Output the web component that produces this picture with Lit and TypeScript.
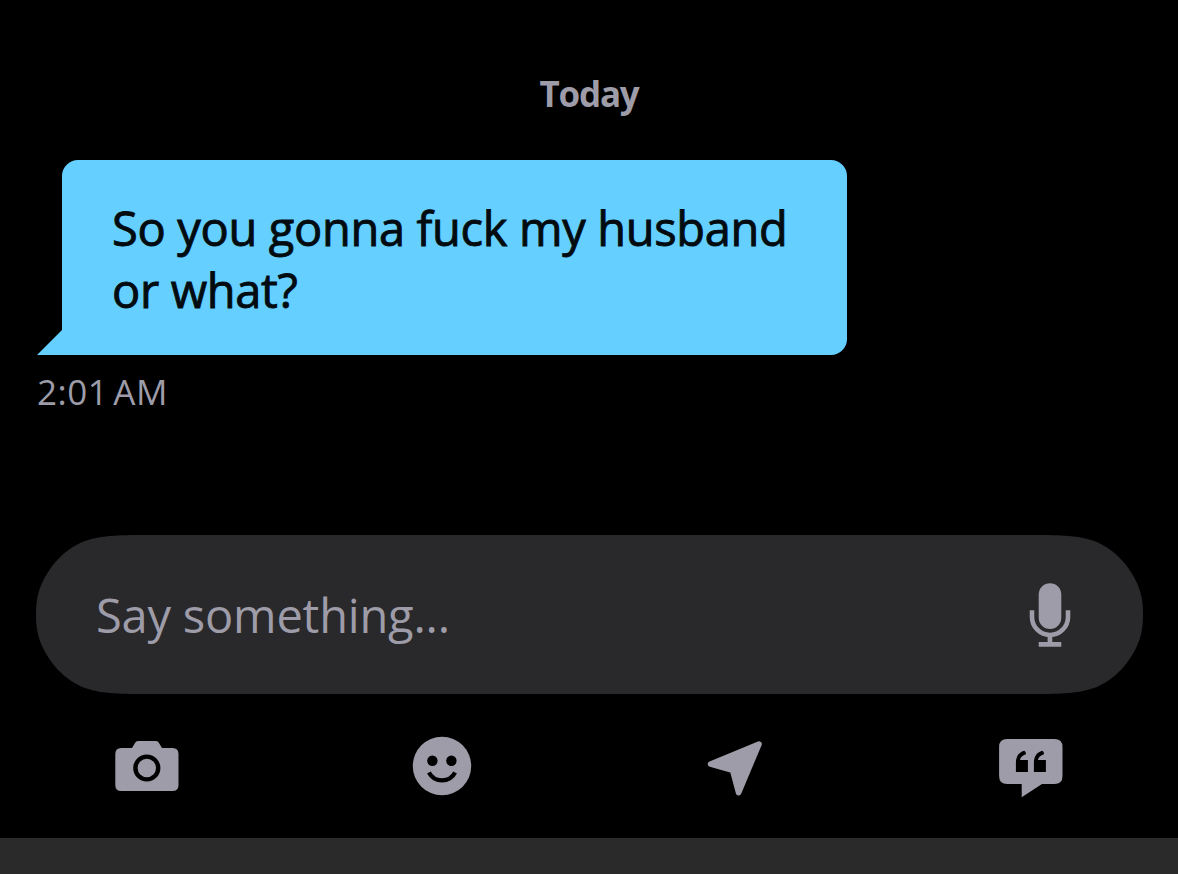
import { LitElement, css, html, svg } from "lit";
import { customElement, property } from "lit/decorators.js";

const icons = {
  camera: svg`
    <path
      fill-rule="evenodd"
      d="M6.3 14H17L20 9Q21 7 23.2 7H41Q43 7 44 9L47 14H57.5Q63.5 14 63.5 20V51Q63.5 57 57.5 57H6.3Q.3 57 .3 51V20Q.3 14 6.3 14ZM31.8 20.4A13.6 13.6 0 1 0 31.8 47.6A13.6 13.6 0 1 0 31.8 20.4Z"
    />
    <circle cx="31.8" cy="34" r="9.2" />
  `,
  smiley: svg`
    <circle cx="32" cy="32" r="29.2" />
    <g class="cutout">
      <circle cx="22.4" cy="26.7" r="5.2" />
      <circle cx="41.4" cy="26.7" r="5.2" />
    </g>
    <path class="smile" d="M18.9 38.4A14.8 14.8 0 0 0 45.1 38.4" />
  `,
  location: svg`
    <path class="rounded" d="M55 10.1L6.6 30.1L28.6 36.2L34.6 58.7Z" />
  `,
  quote: svg`
    <path
      d="M8.1 5H55.5Q63.5 5 63.5 13V42Q63.5 50 55.5 50H43L22.7 63.3V50H8.1Q.1 50 .1 42V13Q.1 5 8.1 5Z"
    />
    <g class="cutout">
      <path d="M16.9 38V29C16.9 22.5 19.7 18.2 25.3 16.7Q27.3 17.8 26.9 20.2C23.5 21.3 21.5 23.2 21 26H28.9V38Z" />
      <path d="M34.9 38V29C34.9 22.5 37.7 18.2 43.3 16.7Q45.3 17.8 44.9 20.2C41.5 21.3 39.5 23.2 39 26H46.9V38Z" />
    </g>
  `,
};

@customElement("chat-bubble")
export class ChatBubble extends LitElement {
  @property() time = "";

  static override styles = css`
    :host {
      display: flex;
      flex-direction: column;
      align-items: flex-start;
    }

    .bubble {
      position: relative;
      box-sizing: border-box;
      width: 785px;
      height: 195px;
      margin-left: 25px;
      padding: 37px 40px 0 50px;
      border-radius: 16px 16px 16px 0;
      background-color: #65cfff;
      color: #020b10;
      font-size: 47px;
      line-height: 62px;
      letter-spacing: -0.33px;
      white-space: pre-line;
      -webkit-text-stroke: 0.9px currentColor;
    }

    .bubble::before {
      content: "";
      position: absolute;
      left: -25px;
      bottom: 0;
      width: 26px;
      height: 26px;
      background-color: #65cfff;
      clip-path: polygon(0 100%, 100% 0, 100% 100%);
    }

    time {
      margin-top: 12px;
      font-size: 35px;
      line-height: 50px;
      letter-spacing: 0.5px;
      word-spacing: -4.5px;
      color: #9d9ca8;
    }
  `;

  override render() {
    return html`
      <div class="bubble"><slot></slot></div>
      <time>${this.time}</time>
    `;
  }
}

@customElement("message-input")
export class MessageInput extends LitElement {
  static override styles = css`
    :host {
      box-sizing: border-box;
      display: flex;
      align-items: center;
      justify-content: space-between;
      width: 1107px;
      height: 159px;
      padding: 0 72px 0 60px;
      background-color: #29292b;
      color: #9d9ca8;
      clip-path: path(
        "M105 0H1002C1030 0 1045 1.5 1058 6C1079 14 1095 32 1103 53C1106 62 1107 69 1107 79.5C1107 90 1106 97 1103 106C1095 127 1079 145 1058 153C1045 157.5 1030 159 1002 159H105C77 159 62 157.5 49 153C28 145 12 127 4 106C1 97 0 90 0 79.5C0 69 1 62 4 53C12 32 28 14 49 6C62 1.5 77 0 105 0Z"
      );
    }

    span {
      font-size: 47px;
      line-height: 62px;
      letter-spacing: -0.2px;
    }

    svg {
      fill: currentColor;
    }

    .arm {
      fill: none;
      stroke: currentColor;
      stroke-width: 4.6;
    }
  `;

  override render() {
    return html`
      <span>Say something...</span>
      <svg width="42" height="64" viewBox="0 0 42 64">
        <rect x="9.7" y=".3" width="22.6" height="45.7" rx="11.3" />
        <path class="arm" d="M3 27.3V34A18 18 0 0 0 39 34V27.3" />
        <path d="M18.6 53H23.3V59H32.3V63.8H9.7V59H18.6Z" />
      </svg>
    `;
  }
}

@customElement("app-root")
export class AppRoot extends LitElement {
  static override styles = css`
    :host {
      display: flex;
      flex-direction: column;
      width: 1178px;
      height: 874px;
      overflow: hidden;
      background-color: #000;
      color: #9d9ca8;
      font-family: "Open Sans", "Noto Sans", sans-serif;
    }

    h2 {
      margin: 69px 0 41px;
      font-size: 35px;
      font-weight: 700;
      line-height: 50px;
      letter-spacing: -1.2px;
      text-align: center;
    }

    chat-bubble {
      height: 375px;
      margin-left: 37px;
    }

    message-input {
      flex: none;
      margin-left: 36px;
    }

    nav {
      display: grid;
      grid-template-columns: repeat(4, 1fr);
      justify-items: center;
      padding: 40px 0;
    }

    nav svg {
      display: block;
      fill: currentColor;
    }

    .cutout {
      fill: #000;
    }

    .smile {
      fill: none;
      stroke: #000;
      stroke-width: 4.2;
    }

    .rounded {
      stroke: currentColor;
      stroke-width: 5.6;
      stroke-linejoin: round;
    }

    footer {
      flex: 1;
      background-color: #2a2a2a;
    }
  `;

  override render() {
    return html`
      <h2>Today</h2>
      <chat-bubble time="2:01 AM">So you gonna fuck my husband
or what?</chat-bubble>
      <message-input></message-input>
      <nav>
        ${Object.values(icons).map(
          (icon) => html`<svg width="64" height="64" viewBox="0 0 64 64">${icon}</svg>`
        )}
      </nav>
      <footer></footer>
    `;
  }
}

declare global {
  interface HTMLElementTagNameMap {
    "app-root": AppRoot;
    "chat-bubble": ChatBubble;
    "message-input": MessageInput;
  }
}
